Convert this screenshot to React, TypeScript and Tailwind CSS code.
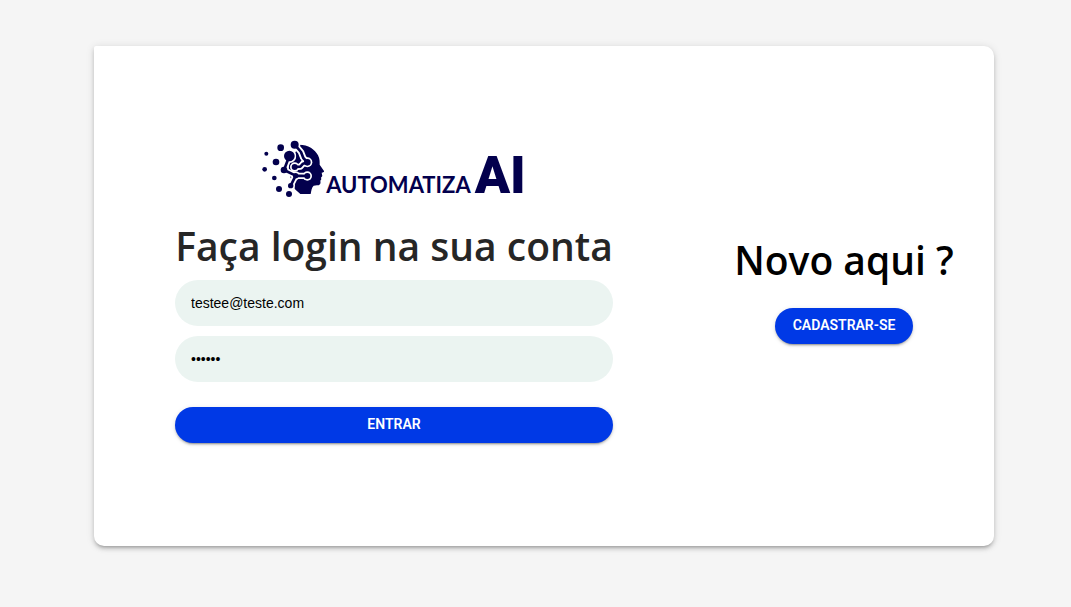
import { useState } from "react";

const looseDots = [
  [34, 65, 6],
  [77, 47, 10],
  [63, 90, 10],
  [29, 112, 7],
  [58, 138, 7],
  [72, 171, 9],
  [102, 186, 9],
];

const nodes = [
  [119, 38, 12],
  [103, 72, 16],
  [87, 114, 10],
  [107, 161, 8],
  [119, 105, 9],
  [157, 91, 10],
  [157, 132, 9],
  [122, 131, 8],
];

const links =
  "M119 38L138 60L145 78L157 91 M103 72L93 98L87 114L122 131L157 132 M122 131L107 161 M119 105L136 104L144 95L157 91";

function HeadMark() {
  return (
    <svg viewBox="21 24 192 174" className="h-[58px] w-16 shrink-0" aria-hidden="true">
      <path
        fill="#03004d"
        d="M132 38C160 38 180 52 189 70C195 82 194 90 194 98L207 117C208 120 205 121 200 122L202 132L198 137L199 142L196 146C198 156 194 160 186 160L176 161C170 166 169 176 167 186H136L120 172L112 150L100 120L104 80L122 60Z"
      />
      <path d={links} fill="none" stroke="#fff" strokeWidth="19" strokeLinejoin="round" />
      {nodes.map(([x, y, r]) => (
        <circle key={`${x}-${y}`} cx={x} cy={y} r={r + 5} fill="#fff" />
      ))}
      <path fill="#03004d" d="M124 62L136 82L134 92L124 88Z" />
      <path d={links} fill="none" stroke="#03004d" strokeWidth="8" strokeLinejoin="round" />
      {[...nodes, ...looseDots].map(([x, y, r]) => (
        <circle key={`${x}-${y}`} cx={x} cy={y} r={r} fill="#03004d" />
      ))}
    </svg>
  );
}

function Logo() {
  return (
    <div className="flex h-[60px] items-start pt-0.5 text-[#03004d]">
      <HeadMark />
      <div className="flex items-baseline gap-1 pt-2">
        <span className="font-[Lato,sans-serif] text-[22px] leading-[56px] font-bold">AUTOMATIZA</span>
        <span className="font-[Roboto,sans-serif] text-[52px] leading-[56px] font-black">AI</span>
      </div>
    </div>
  );
}

const buttonBase =
  "h-9 cursor-pointer rounded-full bg-[#0039e6] px-[18px] pb-0.5 font-[Roboto,sans-serif] text-sm font-semibold text-white uppercase shadow-[0_3px_1px_-2px_rgba(0,0,0,0.2),0_2px_2px_rgba(0,0,0,0.14),0_1px_5px_rgba(0,0,0,0.12)] hover:bg-[#0030c4]";

const inputBase =
  "h-[46px] w-full rounded-full bg-[#ebf4f1] px-4 font-['Liberation_Sans',sans-serif] text-sm text-black outline-none focus-visible:ring-2 focus-visible:ring-[#0039e6]";

const headingBase =
  "font-['Open_Sans',sans-serif] text-[39px] leading-12 font-semibold whitespace-nowrap";

export default function App() {
  const [email, setEmail] = useState("testee@teste.com");
  const [password, setPassword] = useState("teste1");

  return (
    <main className="min-h-screen bg-[#f5f5f5] py-[46px] pr-4 pl-[33px]">
      <div className="mx-auto grid min-h-[500px] w-full max-w-[900px] rounded-[10px] rounded-tl-xs bg-white pb-3 shadow-[0_3px_3px_-2px_rgba(0,0,0,0.2),0_3px_4px_rgba(0,0,0,0.14),0_1px_8px_rgba(0,0,0,0.12)] md:grid-cols-3">
        <section className="flex flex-col items-center justify-center px-4 md:col-span-2">
          <form
            className="flex w-full max-w-[438px] flex-col items-center"
            onSubmit={(event) => event.preventDefault()}
          >
            <Logo />
            <h1 className={`${headingBase} mt-6 mb-[10px] text-[#262626]`}>
              Faça login na sua conta
            </h1>
            <input
              type="email"
              aria-label="Email"
              className={inputBase}
              value={email}
              onChange={(event) => setEmail(event.target.value)}
            />
            <input
              type="password"
              aria-label="Senha"
              className={`${inputBase} mt-[10px]`}
              value={password}
              onChange={(event) => setPassword(event.target.value)}
            />
            <button type="submit" className={`${buttonBase} mt-[25px] w-full`}>
              Entrar
            </button>
          </form>
        </section>
        <section className="flex flex-col items-center justify-center px-4">
          <h2 className={`${headingBase} mb-6 text-black`}>Novo aqui ?</h2>
          <button type="button" className={buttonBase}>
            Cadastrar-se
          </button>
        </section>
      </div>
    </main>
  );
}
